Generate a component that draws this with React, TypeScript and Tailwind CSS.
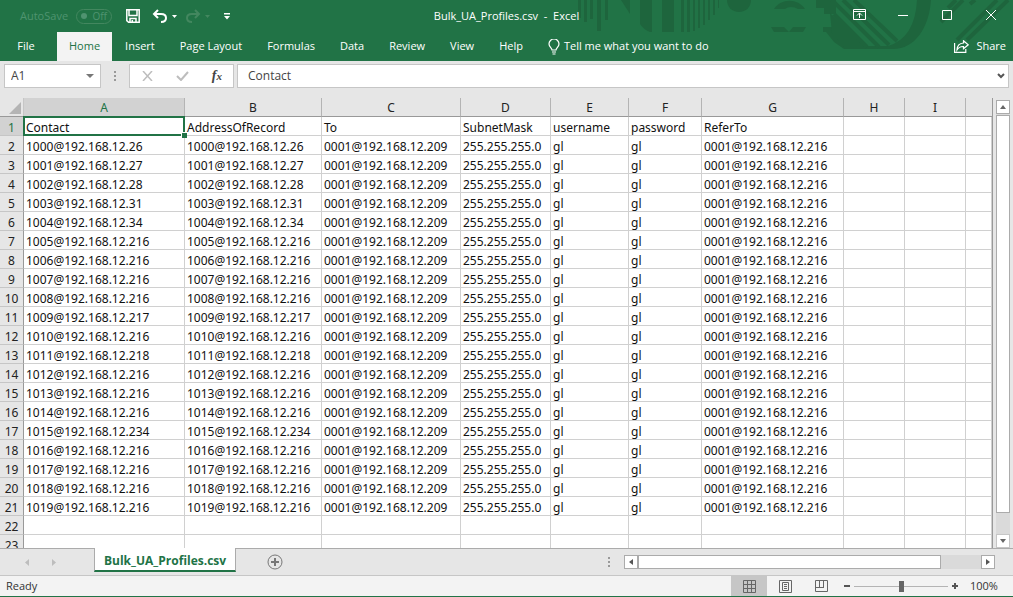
import { useState } from 'react';
import { clsx } from 'clsx';

interface Column {
  name: string;
  width: string;
}

const columns: Column[] = [
  { name: 'A', width: 'w-[161px]' },
  { name: 'B', width: 'w-[137px]' },
  { name: 'C', width: 'w-[139px]' },
  { name: 'D', width: 'w-[90px]' },
  { name: 'E', width: 'w-[78px]' },
  { name: 'F', width: 'w-[73px]' },
  { name: 'G', width: 'w-[142px]' },
  { name: 'H', width: 'w-[61px]' },
  { name: 'I', width: 'w-[61px]' },
  { name: '', width: '' },
];

const header = ['Contact', 'AddressOfRecord', 'To', 'SubnetMask', 'username', 'password', 'ReferTo'];

const hosts = [
  26, 27, 28, 31, 34, 216, 216, 216, 216, 217,
  216, 218, 216, 216, 216, 234, 216, 216, 216, 216,
];

const rows: string[][] = [
  header,
  ...hosts.map((host, i) => {
    const contact = `${1000 + i}@192.168.12.${host}`;
    return [contact, contact, '0001@192.168.12.209', '255.255.255.0', 'gl', 'gl', '0001@192.168.12.216'];
  }),
  [],
  [],
];

const tabs = ['Home', 'Insert', 'Page Layout', 'Formulas', 'Data', 'Review', 'View', 'Help'];

function TitleArt() {
  return (
    <svg className="absolute top-0 right-0 pointer-events-none" width="443" height="61" viewBox="0 0 443 61" fill="none" aria-hidden="true">
      <g fill="#1e653d">
        <path d="M8 0h3v18H8zM14 0h3v22h-3zM20 0h3v19h-3zM27 0h4v31h-4zM35 0h3v20h-3z" />
        <path d="M51 0h9v14z" />
        <path d="M70 0h12v32h-2q-7-3-10-8z" />
        <path d="M92 0h12v32H92zM111 0h3v32h-3zM117 0h3v32h-3zM123 0h2v31h-2zM128 0h2v28h-2zM133 0h2v25h-2zM138 0h2v20h-2zM143 0h2v15h-2zM148 0h1v8h-1z" />
        <path d="M157 0h24c0 7-5 12-12 12s-12-5-12-12z" />
        <path d="M204 9c7-11 24-11 31 0h-7q-3-2-7-2t-6 2z" />
        <path d="M201 27h13l5 5h-15zM223 27h13l-3 5h-14z" />
        <path d="M246 0h20v14h-12V8h-8z" />
        <path d="M253 27h11l9 10 7 6q8 4 18 3h20q27-8 29-46h14c-2 28-16 49-38 49h-49l-10-7-8-10h-3z" />
        <path d="M260 13l36 34h-22l-12-14z" />
      </g>
      <g stroke="#1e653d" strokeWidth="4">
        <path d="M262 0l47 47M273 0l46 45M284 0l43 41M264 14l33 33" />
        <path d="M387 40l40-40M397 40l41-40M371 22l22-22M378 8l8-8M400 4l5-4" />
      </g>
    </svg>
  );
}

function TitleBar() {
  return (
    <div className="relative flex h-8 items-center text-white">
      <label className="ml-5 flex items-center gap-2 text-[#4f9370]">
        AutoSave
        <input type="checkbox" disabled className="sr-only" />
        <span className="flex h-[15px] w-[36px] items-center justify-between rounded-full border border-[#43875f] px-1 text-[10px]">
          <span className="h-[6px] w-[6px] rounded-full bg-[#4f9370]" />
          Off
        </span>
      </label>
      <button aria-label="Save" className="ml-[14px]">
        <svg width="14" height="14" viewBox="0 0 14 14" fill="none" stroke="currentColor" strokeWidth="1.5">
          <path d="M.8.8h12.4v12.4H2.600L.8 11.6zM3 1v5.500h8V1M4 13V9.500h6V13M6.300 11v2" />
        </svg>
      </button>
      <button aria-label="Undo" className="ml-3 flex items-center gap-1">
        <svg width="16" height="14" viewBox="0 0 16 14" fill="none" stroke="currentColor" strokeWidth="2">
          <path d="M6 1L2 5l4 4M2 5h7c3 0 5 1.500 5 4s-2 4-5 4" />
        </svg>
        <svg width="5" height="3" fill="currentColor"><path d="M0 0h5L2.500 3z" /></svg>
      </button>
      <button aria-label="Redo" disabled className="ml-2 flex items-center gap-1 text-[#43875f]">
        <svg width="16" height="14" viewBox="0 0 16 14" fill="none" stroke="currentColor" strokeWidth="2">
          <path d="M10 1l4 4-4 4M14 5H7C4 5 2 6.500 2 9s2 4 5 4" />
        </svg>
        <svg width="5" height="3" fill="currentColor"><path d="M0 0h5L2.500 3z" /></svg>
      </button>
      <button aria-label="Customize Quick Access Toolbar" className="ml-[14px]">
        <svg width="6" height="7" fill="currentColor"><path d="M0 0h6v1.500H0zM0 3h6L3 6.500z" /></svg>
      </button>
      <h1 className="absolute inset-x-0 top-0 text-center leading-8 whitespace-pre pointer-events-none">Bulk_UA_Profiles.csv  -  Excel</h1>
      <div className="ml-auto flex h-[29px] items-center self-start">
        <button aria-label="Ribbon Display Options" className="flex w-[44px] justify-center">
          <svg width="13" height="11" viewBox="0 0 13 11" fill="none" stroke="currentColor">
            <path d="M.5.5h12v10H.5zM.5 2.500h12M6.500 9V4M4 6.500L6.500 4 9 6.500" />
          </svg>
        </button>
        <button aria-label="Minimize" className="flex w-[44px] justify-center">
          <svg width="10" height="10" stroke="currentColor"><path d="M0 5.500h10" /></svg>
        </button>
        <button aria-label="Maximize" className="flex w-[44px] justify-center">
          <svg width="10" height="10" fill="none" stroke="currentColor"><path d="M.5.5h9v9h-9z" /></svg>
        </button>
        <button aria-label="Close" className="flex w-[44px] justify-center">
          <svg width="10" height="10" stroke="currentColor"><path d="M0 0l10 10M10 0L0 10" /></svg>
        </button>
      </div>
    </div>
  );
}

function RibbonTabs() {
  const [active, setActive] = useState('Home');

  return (
    <nav className="relative flex h-[29px] gap-px text-white">
      <button className="w-[56px] pr-1">File</button>
      {tabs.map((tab) => (
        <button
          key={tab}
          onClick={() => setActive(tab)}
          className={clsx('px-3', active === tab ? 'bg-[#f3f3f3] text-[#217346]' : 'text-white')}
        >
          {tab}
        </button>
      ))}
      <button className="ml-3 flex items-center gap-1">
        <svg width="12" height="16" viewBox="0 0 12 16" fill="none" stroke="currentColor" strokeWidth="1.2">
          <path d="M4 11c0-2-3-3-3-6a5 5 0 0 1 10 0c0 3-3 4-3 6zM4 13h4M4.500 15h3" />
        </svg>
        Tell me what you want to do
      </button>
      <button className="mr-[7px] ml-auto flex items-center gap-[7px]">
        <svg width="15" height="13" viewBox="0 0 15 13" fill="none" stroke="currentColor" strokeWidth="1.2">
          <path d="M.6 3v9.400h11.200V9M9.500.8l4.700 4-4.700 4V6.500C6.500 6.300 4.500 7.500 3 9.800c.2-4 2.500-6.500 6.500-6.800z" />
        </svg>
        Share
      </button>
    </nav>
  );
}

function FormulaBar() {
  return (
    <div className="flex h-[36px] shrink-0 items-center bg-[#e6e6e6] px-1 pb-[6px] text-[12px] text-[#444]">
      <div className="flex h-6 w-[97px] items-center border border-[#c6c6c6] bg-white pr-[6px]">
        <input aria-label="Name box" defaultValue="A1" className="min-w-0 flex-1 pl-[6px] outline-none" />
        <button aria-label="Named ranges">
          <svg width="8" height="4" fill="#777"><path d="M0 0h8L4 4z" /></svg>
        </button>
      </div>
      <svg className="mx-[13px]" width="2" height="11" fill="#999"><path d="M0 0h2v2H0zM0 4h2v2H0zM0 8h2v2H0z" /></svg>
      <div className="flex h-6 w-[105px] items-center justify-between border border-[#c6c6c6] bg-white pr-[11px] pl-3">
        <button aria-label="Cancel" disabled>
          <svg width="11" height="10" stroke="#bdbdbd" strokeWidth="1.500"><path d="M1 0l9 10M10 0L1 10" /></svg>
        </button>
        <button aria-label="Enter" disabled>
          <svg width="13" height="10" fill="none" stroke="#bdbdbd" strokeWidth="2"><path d="M1 5l4 4 7-8" /></svg>
        </button>
        <button aria-label="Insert function" className="font-['Liberation_Serif',serif] text-[14px] leading-4 font-bold italic">
          f<span className="text-[11px]">x</span>
        </button>
      </div>
      <div className="ml-[3px] flex h-6 flex-1 items-center border border-[#c6c6c6] bg-white pr-[3px]">
        <input aria-label="Formula bar" defaultValue="Contact" className="min-w-0 flex-1 pl-[10px] outline-none" />
        <button aria-label="Expand formula bar">
          <svg width="8" height="6" fill="none" stroke="#555" strokeWidth="2"><path d="M1 1l3 3 3-3" /></svg>
        </button>
      </div>
    </div>
  );
}

function Sheet() {
  return (
    <div className="min-w-0 flex-1 overflow-hidden border-r border-[#999]">
      <table className="w-full table-fixed border-separate border-spacing-0 bg-white font-['Noto_Sans',sans-serif] text-[12px]">
        <colgroup>
          <col className="w-[24px]" />
          {columns.map((col, i) => (
            <col key={i} className={col.width} />
          ))}
        </colgroup>
        <thead>
          <tr>
            <th aria-label="Select all" className="h-[19px] border-r border-b border-r-[#c6c6c6] border-b-[#999] bg-[#e6e6e6] p-0 align-bottom">
              <svg className="mb-[2px] ml-[9px]" width="12" height="12" fill="#b4b4b4"><path d="M12 0v12H0z" /></svg>
            </th>
            {columns.map((col, i) => (
              <th
                key={i}
                className={clsx(
                  'h-[19px] border-b px-0 pt-[2px] pb-0 leading-4 font-normal',
                  i < columns.length - 1 && 'border-r border-r-[#b4b4b4]',
                  i === 0 ? 'border-b-[#217346] bg-[#d2d2d2] text-[#217346]' : 'border-b-[#999] bg-[#e6e6e6] text-[#222]',
                )}
              >
                {col.name}
              </th>
            ))}
          </tr>
        </thead>
        <tbody>
          {rows.map((row, r) => (
            <tr key={r}>
              <th
                scope="row"
                className={clsx(
                  'h-[19px] border-r border-b border-r-[#999] border-b-[#c6c6c6] px-0 pt-1 pb-0 leading-[14px] font-normal',
                  r === 0 ? 'bg-[#d2d2d2] text-[#217346]' : 'bg-[#e6e6e6] text-[#222]',
                )}
              >
                {r + 1}
              </th>
              {columns.map((col, c) => (
                <td
                  key={c}
                  className="relative h-[19px] border-r border-b border-[#d0d0d0] pt-1 pr-0 pb-0 pl-[2px] leading-[14px] whitespace-nowrap text-[#111]"
                >
                  {row[c]}
                  {r === 0 && c === 0 && (
                    <span className="absolute -inset-px z-10 border-2 border-[#217346]">
                      <span className="absolute -right-[4px] -bottom-[4px] h-[6px] w-[6px] border-t border-l border-white bg-[#217346]" />
                    </span>
                  )}
                </td>
              ))}
            </tr>
          ))}
        </tbody>
      </table>
    </div>
  );
}

function VerticalScroll() {
  return (
    <div className="mx-[3px] mt-[2px] flex w-[14px] flex-col bg-[#dadada]">
      <button aria-label="Scroll up" className="flex h-[14px] items-center justify-center border border-[#ababab] bg-white">
        <svg width="6" height="4" fill="#666"><path d="M0 4h6L3 0z" /></svg>
      </button>
      <div className="mt-px flex-1 border border-[#ababab] bg-white" />
      <div className="h-[21px]" />
      <button aria-label="Scroll down" className="flex h-[14px] items-center justify-center border border-[#c6c6c6] bg-white">
        <svg width="6" height="4" fill="#666"><path d="M0 0h6L3 4z" /></svg>
      </button>
    </div>
  );
}

function SheetTabs() {
  return (
    <div className="flex h-[27px] shrink-0 items-center border-t border-[#ababab] bg-[#e6e6e6]">
      <div className="flex w-[94px] items-center gap-[23px] pl-[25px]">
        <button aria-label="Previous sheet" disabled>
          <svg width="4" height="7" fill="#bdbdbd"><path d="M4 0v7L0 3.500z" /></svg>
        </button>
        <button aria-label="Next sheet" disabled>
          <svg width="4" height="7" fill="#bdbdbd"><path d="M0 0v7l4-3.500z" /></svg>
        </button>
      </div>
      <button className="-mt-px h-6 self-start border-x border-b-2 border-x-[#ababab] border-b-[#217346] bg-white px-[9px] pt-1 text-[12px] leading-4 font-bold text-[#217346]">
        Bulk_UA_Profiles.csv
      </button>
      <button aria-label="New sheet" className="ml-[31px]">
        <svg width="16" height="16" viewBox="0 0 16 16" fill="none" stroke="#777">
          <circle cx="8" cy="8" r="7" />
          <path d="M8 4v8M4 8h8" strokeWidth="2" />
        </svg>
      </button>
      <svg className="mr-[14px] ml-auto" width="2" height="10" fill="#999"><path d="M0 0h2v2H0zM0 4h2v2H0zM0 8h2v2H0z" /></svg>
      <div className="mr-[18px] flex h-[14px] w-[371px] bg-[#dadada]">
        <button aria-label="Scroll left" className="flex w-[14px] items-center justify-center border border-[#ababab] bg-white">
          <svg width="4" height="6" fill="#555"><path d="M4 0v6L0 3z" /></svg>
        </button>
        <div className="flex-1 border border-[#ababab] bg-white" />
        <div className="w-[40px]" />
        <button aria-label="Scroll right" className="flex w-[14px] items-center justify-center border border-[#ababab] bg-white">
          <svg width="4" height="6" fill="#555"><path d="M0 0v6l4-3z" /></svg>
        </button>
      </div>
    </div>
  );
}

function StatusBar() {
  return (
    <div className="flex h-[22px] shrink-0 items-center border-t border-b border-t-[#c6c6c6] border-b-[#217346] bg-[#f3f3f3] text-[#333]">
      <span className="pl-[6px]">Ready</span>
      <div className="ml-auto flex items-center self-stretch">
        <button aria-label="Normal view" className="flex w-9 items-center justify-center self-stretch bg-[#c6c6c6]">
          <svg width="13" height="13" fill="none" stroke="#666"><path d="M.5.5h12v12H.5zM4.500 0v13M8.500 0v13M0 4.500h13M0 8.500h13" /></svg>
        </button>
        <button aria-label="Page layout view" className="flex w-9 items-center justify-center">
          <svg width="13" height="13" fill="none" stroke="#666"><path d="M.5.5h12v12H.5zM3.500 2.500h6v8h-6zM5 4.500h3M5 6.500h3M5 8.500h3" /></svg>
        </button>
        <button aria-label="Page break view" className="flex w-9 items-center justify-center">
          <svg width="13" height="12" fill="none" stroke="#666"><path d="M.5.5h12v11H.5zM4.500 0v7M8.500 0v7M0 7.500h9" /></svg>
        </button>
      </div>
      <button aria-label="Zoom out" className="ml-[5px]">
        <svg width="6" height="8" fill="#555"><path d="M0 3h6v2H0z" /></svg>
      </button>
      <input
        type="range"
        aria-label="Zoom"
        min="0"
        max="200"
        defaultValue="100"
        className="mx-1 h-[11px] w-[94px] appearance-none bg-[linear-gradient(#b4b4b4,#b4b4b4)] bg-[length:100%_1px] bg-center bg-no-repeat [&::-webkit-slider-thumb]:h-[11px] [&::-webkit-slider-thumb]:w-[5px] [&::-webkit-slider-thumb]:appearance-none [&::-webkit-slider-thumb]:bg-[#666]"
      />
      <button aria-label="Zoom in">
        <svg width="6" height="6" fill="#555"><path d="M0 2h6v2H0zM2 0h2v6H2z" /></svg>
      </button>
      <span className="w-[55px] pl-3">100%</span>
    </div>
  );
}

export default function App() {
  return (
    <div className="flex h-screen flex-col overflow-hidden bg-[#e6e6e6] font-['Open_Sans',sans-serif] text-[11px]">
      <header className="relative shrink-0 bg-[#217346]">
        <TitleArt />
        <TitleBar />
        <RibbonTabs />
      </header>
      <FormulaBar />
      <main className="flex min-h-0 flex-1 pt-px">
        <Sheet />
        <VerticalScroll />
      </main>
      <SheetTabs />
      <StatusBar />
    </div>
  );
}
